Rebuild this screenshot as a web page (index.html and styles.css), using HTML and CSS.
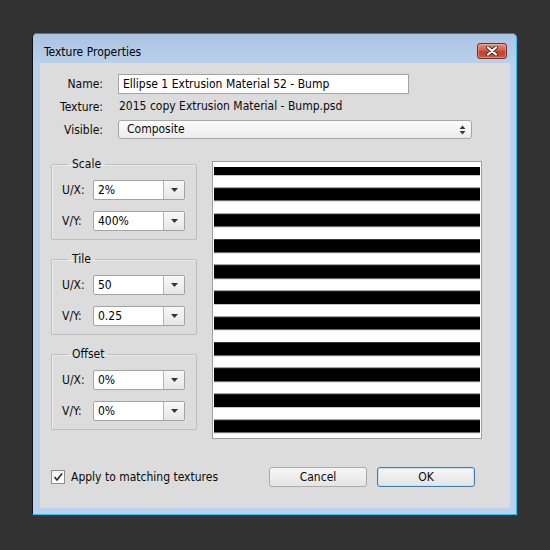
FILE: index.html
```html
<!DOCTYPE html>
<html>
<head>
<meta charset="utf-8">
<title>Texture Properties</title>
<link rel="stylesheet" href="styles.css">
</head>
<body>
<div class="window">
  <div class="titlebar">
    <span class="title">Texture Properties</span>
    <button class="close" aria-label="Close">
      <svg width="12" height="10" viewBox="0 0 12 10">
        <path d="M2 1.5 L10 8.5 M10 1.5 L2 8.5" stroke="#4a2a26" stroke-width="4" stroke-linecap="round"/>
        <path d="M2 1.5 L10 8.5 M10 1.5 L2 8.5" stroke="#ffffff" stroke-width="2.2" stroke-linecap="round"/>
      </svg>
    </button>
  </div>
  <div class="panel">
    <div class="form">
      <span class="lbl">Name:</span>
      <div class="textbox">Ellipse 1 Extrusion Material 52 - Bump</div>
      <span class="lbl">Texture:</span>
      <span class="value">2015 copy Extrusion Material - Bump.psd</span>
      <span class="lbl">Visible:</span>
      <div class="select">
        <span>Composite</span>
        <svg width="7" height="10" viewBox="0 0 7 10"><path d="M3.5 0.5 L6.5 4 L0.5 4 Z M0.5 6 L6.5 6 L3.5 9.5 Z" fill="#3a3a3a"/></svg>
      </div>
    </div>

    <div class="main">
      <div class="groups">
        <fieldset class="group">
          <legend>Scale</legend>
          <div class="row"><span class="glbl">U/X:</span><div class="combo"><span class="cval">2%</span><span class="cbtn"><svg width="7" height="4" viewBox="0 0 7 4"><path d="M0 0 L7 0 L3.5 4 Z" fill="#333"/></svg></span></div></div>
          <div class="row"><span class="glbl">V/Y:</span><div class="combo"><span class="cval">400%</span><span class="cbtn"><svg width="7" height="4" viewBox="0 0 7 4"><path d="M0 0 L7 0 L3.5 4 Z" fill="#333"/></svg></span></div></div>
        </fieldset>
        <fieldset class="group">
          <legend>Tile</legend>
          <div class="row"><span class="glbl">U/X:</span><div class="combo"><span class="cval">50</span><span class="cbtn"><svg width="7" height="4" viewBox="0 0 7 4"><path d="M0 0 L7 0 L3.5 4 Z" fill="#333"/></svg></span></div></div>
          <div class="row"><span class="glbl">V/Y:</span><div class="combo"><span class="cval">0.25</span><span class="cbtn"><svg width="7" height="4" viewBox="0 0 7 4"><path d="M0 0 L7 0 L3.5 4 Z" fill="#333"/></svg></span></div></div>
        </fieldset>
        <fieldset class="group">
          <legend>Offset</legend>
          <div class="row"><span class="glbl">U/X:</span><div class="combo"><span class="cval">0%</span><span class="cbtn"><svg width="7" height="4" viewBox="0 0 7 4"><path d="M0 0 L7 0 L3.5 4 Z" fill="#333"/></svg></span></div></div>
          <div class="row"><span class="glbl">V/Y:</span><div class="combo"><span class="cval">0%</span><span class="cbtn"><svg width="7" height="4" viewBox="0 0 7 4"><path d="M0 0 L7 0 L3.5 4 Z" fill="#333"/></svg></span></div></div>
        </fieldset>
      </div>
      <div class="preview"><div class="stripes"></div></div>
    </div>

    <div class="footer">
      <label class="check">
        <span class="box"><svg width="12" height="12" viewBox="0 0 12 12"><path d="M2.5 6 L5 9 L10 2.5" stroke="#2a2a2a" stroke-width="1.6" fill="none"/></svg></span>
        <span>Apply to matching textures</span>
      </label>
      <div class="buttons">
        <button class="btn">Cancel</button>
        <button class="btn ok">OK</button>
      </div>
    </div>
  </div>
</div>
</body>
</html>
```

FILE: styles.css
```css
* { box-sizing: border-box; }

html, body {
  margin: 0;
  width: 550px;
  height: 550px;
  background: #323232;
  overflow: hidden;
}

body {
  padding: 33px 0 0 32px;
  font-family: "DejaVu Sans Condensed", "DejaVu Sans", sans-serif;
  font-stretch: condensed;
  font-size: 12px;
  color: #0a0a0a;
}

.window {
  width: 485px;
  height: 482px;
  display: flex;
  flex-direction: column;
  padding: 0 6px 6px 7px;
  border: 1px solid;
  border-color: #5d6f82 #27bdf0 #27bdf0 #101010;
  border-radius: 5px 5px 0 0;
  background: #bad2eb;
}

.titlebar {
  height: 29px;
  flex: none;
  display: flex;
  justify-content: space-between;
  align-items: flex-start;
  padding: 11px 9px 0 11px;
  background: linear-gradient(#a9c3e1, #b9d1eb);
  margin: 0 -6px 0 -7px;
  border-radius: 4px 4px 0 0;
}

.title {
  font-size: 12px;
  line-height: 14px;
  color: #000;
}

.close {
  margin-top: -2px;
  width: 30px;
  height: 16px;
  padding: 0;
  display: flex;
  align-items: center;
  justify-content: center;
  border: 1px solid #7e2a20;
  border-radius: 3px;
  background: linear-gradient(#e0907f 0%, #d0604c 45%, #c0402c 55%, #c85a44 100%);
  box-shadow: inset 0 0 0 1px rgba(255, 200, 190, 0.45);
}

.panel {
  flex: 1;
  background: #dcdcdc;
  padding-top: 11px;
  display: flex;
  flex-direction: column;
}

.form {
  display: grid;
  grid-template-columns: 63px 354px;
  column-gap: 15px;
  align-items: center;
}

.lbl {
  text-align: right;
  line-height: 14px;
}

.textbox {
  width: 291px;
  height: 20px;
  border: 1px solid #a3a3a3;
  background: #fff;
  padding: 0 4px;
  line-height: 18px;
  color: #000;
}

.value {
  height: 14px;
  line-height: 14px;
  margin: 5px 0 7px 1px;
}

.select {
  height: 19px;
  display: flex;
  align-items: center;
  justify-content: space-between;
  padding: 0 5px 0 8px;
  border: 1px solid #a6a6a6;
  border-radius: 3px;
  background: linear-gradient(#fbfbfb, #ececec);
  line-height: 17px;
}

.main {
  display: flex;
  align-items: flex-start;
  margin-top: 18px;
  padding-left: 11px;
}

.groups {
  width: 146px;
  display: flex;
  flex-direction: column;
  gap: 12px;
}

.group {
  margin: 0;
  padding: 9px 10px 8px 10px;
  border: 1px solid #bdbdbd;
  border-radius: 2px;
  box-shadow: inset 1px 1px 0 #ececec;
  display: flex;
  flex-direction: column;
  gap: 11px;
}

.group legend {
  margin-left: 6px;
  padding: 0 4px;
  line-height: 14px;
  height: 14px;
}

.row {
  display: flex;
  align-items: center;
  height: 20px;
}

.glbl {
  width: 31px;
  flex: none;
}

.combo {
  width: 92px;
  height: 20px;
  display: flex;
  border: 1px solid #a3a3a3;
  border-radius: 2px;
  background: #fff;
}

.cval {
  flex: 1;
  padding-left: 4px;
  line-height: 18px;
  color: #000;
}

.cbtn {
  width: 21px;
  flex: none;
  display: flex;
  align-items: center;
  justify-content: center;
  border-left: 1px solid #b4b4b4;
  background: linear-gradient(#f8f8f8, #e6e6e6);
  border-radius: 0 1px 1px 0;
}

.preview {
  margin: 4px 0 0 15px;
  width: 270px;
  height: 278px;
  border: 1px solid #a0a0a0;
  padding: 0 1px;
  background: #fff;
}

.stripes {
  height: 100%;
  background:
    linear-gradient(#fff, #fff) 0 0 / 100% 5px no-repeat,
    repeating-linear-gradient(to bottom,
      #000 0px, #000 12.6px,
      #8a8a8a 12.6px, #8a8a8a 13.4px,
      #fff 13.4px, #fff 25px,
      #8a8a8a 25px, #8a8a8a 25.78px) 0 0.22px / 100% 100% repeat-y;
}

.footer {
  margin-top: 28px;
  height: 20px;
  display: flex;
  align-items: center;
  justify-content: space-between;
  padding: 0 35px 0 11px;
}

.check {
  display: flex;
  align-items: center;
  gap: 6px;
}

.box {
  width: 14px;
  height: 14px;
  border: 1px solid #8e8e8e;
  background: linear-gradient(#f2f2f2, #fff);
  display: flex;
  align-items: center;
  justify-content: center;
}

.buttons {
  display: flex;
  gap: 10px;
}

.btn {
  width: 98px;
  height: 20px;
  padding: 0;
  font: inherit;
  color: #0a0a0a;
  border: 1px solid #acacac;
  border-radius: 3px;
  background: linear-gradient(#f6f6f6, #e4e4e4);
}

.btn.ok {
  border-color: #3c7fb1;
  box-shadow: inset 0 0 0 1px #c4e1f6;
}
```
